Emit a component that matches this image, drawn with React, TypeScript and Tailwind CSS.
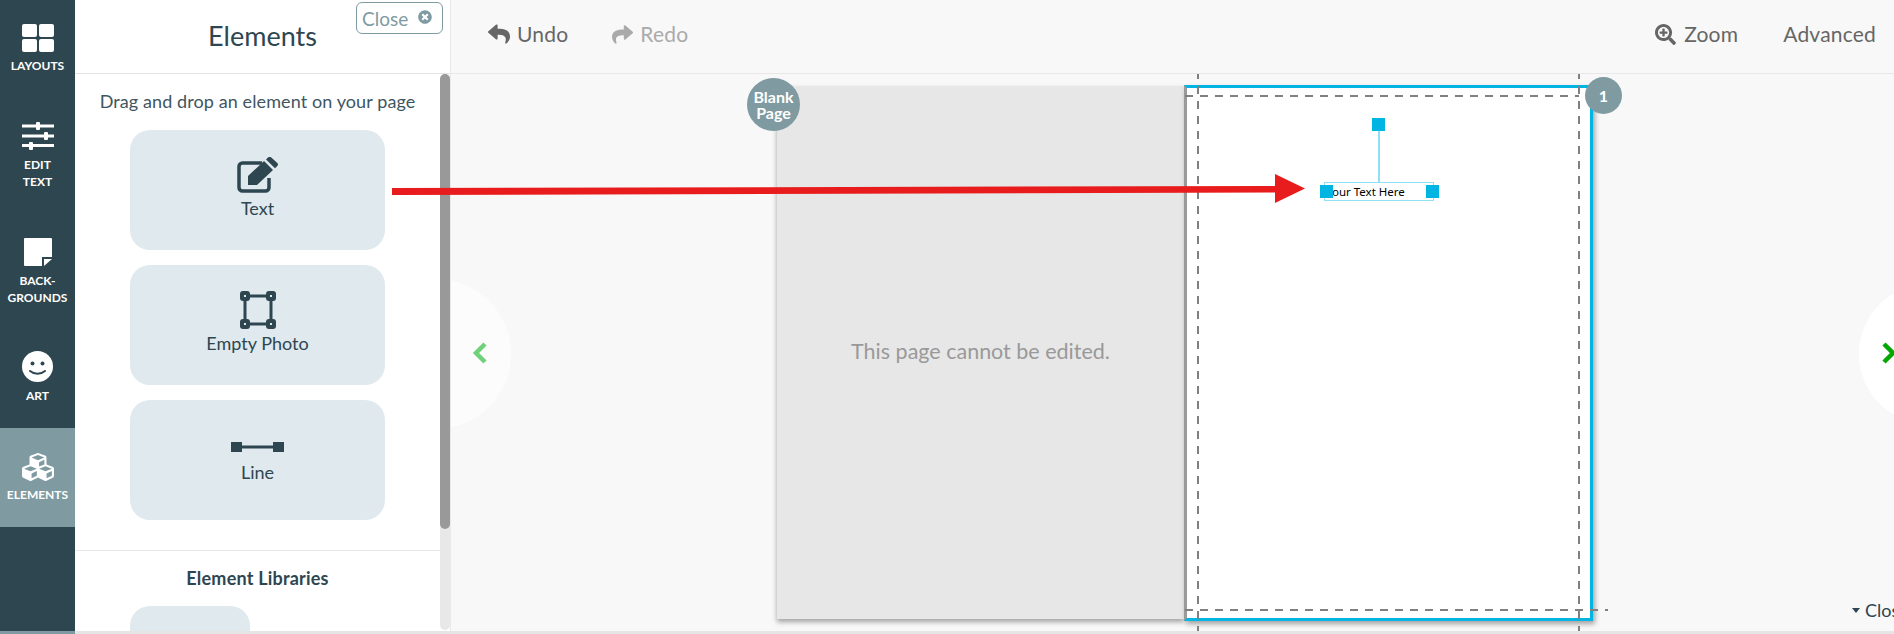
import { FaCubes, FaReply, FaSearchPlus, FaShare, FaTimesCircle } from 'react-icons/fa'

const sideItems = [
  { lines: ['LAYOUTS'], icon: 'layouts', h: 'h-[98px]', pt: 'pt-[24px]', mt: 'mt-[5px]' },
  { lines: ['EDIT', 'TEXT'], icon: 'sliders', h: 'h-[116px]', pt: 'pt-[24px]', mt: 'mt-[6px]' },
  { lines: ['BACK-', 'GROUNDS'], icon: 'note', h: 'h-[114px]', pt: 'pt-[24px]', mt: 'mt-[6px]' },
  { lines: ['ART'], icon: 'smile', h: 'h-[100px]', pt: 'pt-[24px]', mt: 'mt-[7px]' },
  { lines: ['ELEMENTS'], icon: 'cubes', h: 'h-[99px]', pt: 'pt-[25px]', mt: 'mt-[5px]', active: true },
]

function SideIcon({ name }: { name: string }) {
  if (name === 'layouts') {
    return (
      <svg width="32" height="28" viewBox="0 0 32 28" fill="#fff">
        <rect x="0" y="0" width="15" height="13" rx="2" />
        <rect x="17" y="0" width="15" height="13" rx="2" />
        <rect x="0" y="15" width="15" height="13" rx="2" />
        <rect x="17" y="15" width="15" height="13" rx="2" />
      </svg>
    )
  }
  if (name === 'sliders') {
    return (
      <svg width="32" height="28" viewBox="0 0 32 28" fill="#fff">
        <rect x="0" y="2.500" width="32" height="3" />
        <rect x="14" y="0" width="4" height="8" rx="1" />
        <rect x="0" y="12.500" width="32" height="3" />
        <rect x="22" y="10" width="4" height="8" rx="1" />
        <rect x="0" y="22" width="32" height="3" />
        <rect x="7" y="20" width="4" height="8" rx="1" />
      </svg>
    )
  }
  if (name === 'note') {
    return (
      <svg width="28" height="28" viewBox="0 0 28 28" fill="#fff">
        <path d="M1 0h26a1 1 0 0 1 1 1v18h-10v9H1a1 1 0 0 1-1-1V1a1 1 0 0 1 1-1z" />
        <path d="M20 21h8l-8 7z" />
      </svg>
    )
  }
  if (name === 'smile') {
    return (
      <svg width="31" height="31" viewBox="0 0 31 31">
        <circle cx="15.500" cy="15.500" r="15.500" fill="#fff" />
        <circle cx="10.500" cy="12.500" r="2" fill="#2e4650" />
        <circle cx="20.500" cy="12.500" r="2" fill="#2e4650" />
        <path d="M8 20c4 3.500 11 3.500 15 0" fill="none" stroke="#2e4650" strokeWidth="2" strokeLinecap="round" />
      </svg>
    )
  }
  return <FaCubes className="text-white" size={32} />
}

function Sidebar() {
  return (
    <div className="w-[75px] shrink-0 bg-[#2e4650] flex flex-col">
      {sideItems.map((item) => (
        <div
          key={item.icon}
          className={`${item.h} ${item.pt} ${item.active ? 'bg-[#7f9ba1]' : ''} flex flex-col items-center`}
        >
          <div className="h-[28px] flex items-center justify-center">
            <SideIcon name={item.icon} />
          </div>
          <div className={`${item.mt} text-white text-[12px] font-bold leading-[17px] text-center`}>
            {item.lines.map((l) => (
              <div key={l}>{l}</div>
            ))}
          </div>
        </div>
      ))}
    </div>
  )
}

function EditIcon() {
  return (
    <svg width="41" height="36" viewBox="0 0 41 36" fill="#2e4650">
      <path
        d="M25 6H5.500a3.500 3.500 0 0 0-3.500 3.500v21a3.500 3.500 0 0 0 3.500 3.500h23a3.500 3.500 0 0 0 3.500-3.500V21"
        fill="none"
        stroke="#2e4650"
        strokeWidth="3.500"
      />
      <path d="M11 28v-9L27 4l9 9-16 15z" />
      <path d="M29 2.500 31 .500c1-.8 2.400-.8 3.300 0l6 5.500c.9.9.9 2.200 0 3L38 11.300z" />
    </svg>
  )
}

function PhotoIcon() {
  return (
    <svg width="36" height="38" viewBox="0 0 36 38" fill="none">
      <path d="M5 5h26v28H5z" stroke="#2e4650" strokeWidth="3" />
      {[
        [5, 5],
        [31, 5],
        [5, 33],
        [31, 33],
      ].map(([x, y]) => (
        <g key={`${x}-${y}`}>
          <rect x={x - 5} y={y - 5} width="10" height="10" rx="3" fill="#2e4650" />
          <rect x={x - 1} y={y - 1} width="2" height="2" fill="#dfe9ee" />
        </g>
      ))}
    </svg>
  )
}

function LineIcon() {
  return (
    <svg width="53" height="10" viewBox="0 0 53 10" fill="#2e4650">
      <rect x="0" y="0" width="11" height="10" />
      <rect x="10" y="3.500" width="33" height="3" />
      <rect x="42" y="0" width="11" height="10" />
    </svg>
  )
}

function ElementCard({ label, icon, top }: { label: string; icon: React.ReactNode; top: string }) {
  return (
    <div className={`w-[255px] h-[120px] rounded-[20px] bg-[#dfe9ee] flex flex-col items-center ${top}`}>
      <div className="flex items-center justify-center">{icon}</div>
      <div className="text-[18px] leading-[22px] text-[#2e4650]">{label}</div>
    </div>
  )
}

function Panel() {
  return (
    <div className="w-[375px] shrink-0 bg-white flex flex-col relative">
      <div className="h-[74px] shrink-0 border-b border-[#e2e2e2] flex items-center justify-center">
        <span className="text-[27px] text-[#2e4650]">Elements</span>
      </div>
      <div className="absolute top-[2px] left-[281px] w-[87px] h-[32px] border border-[#7f9ba1] rounded-[6px] flex items-center pl-[5px] gap-[10px] text-[#7f9ba1]">
        <span className="text-[19px] leading-none">Close</span>
        <FaTimesCircle size={14} className="text-[#7f9ba1] -mt-[2px]" />
      </div>
      <div className="flex flex-1 min-h-0">
        <div className="w-[365px] overflow-hidden">
          <div className="pt-[16px] text-center text-[18px] tracking-[0.1px] leading-[22px] text-[#40565f] whitespace-nowrap">
            Drag and drop an element on your page
          </div>
          <div className="mt-[18px] flex flex-col items-center gap-[15px]">
            <ElementCard label="Text" top="pt-[27px] gap-[4px]" icon={<EditIcon />} />
            <ElementCard label="Empty Photo" top="pt-[26px] gap-[3px]" icon={<PhotoIcon />} />
            <ElementCard label="Line" top="pt-[42px] gap-[9px]" icon={<LineIcon />} />
          </div>
          <div className="mt-[30px] border-t border-[#e8e8e8] pt-[16px] text-center text-[18px] tracking-[0.2px] leading-[22px] font-bold text-[#2e4650]">
            Element Libraries
          </div>
          <div className="mt-[17px] ml-[55px] w-[120px] h-[40px] rounded-t-[20px] bg-[#dfe9ee]" />
        </div>
        <div className="w-[10px] bg-[#e8e8e8] rounded-[5px] mb-[1px]">
          <div className="h-[455px] bg-[#999999] rounded-[5px]" />
        </div>
      </div>
    </div>
  )
}

function Toolbar() {
  return (
    <div className="h-[74px] shrink-0 border-b border-[#e8e8e8] flex items-center pl-[37px] pr-[18px] text-[21px] tracking-[0.2px] pb-[5px]">
      <FaReply size={22} className="text-[#666666]" />
      <span className="ml-[7px] text-[#666666]">Undo</span>
      <FaShare size={21} className="ml-[44px] text-[#aaaaaa]" />
      <span className="ml-[7px] text-[#aaaaaa]">Redo</span>
      <FaSearchPlus size={21} className="ml-auto text-[#666666]" />
      <span className="ml-[8px] text-[#666666]">Zoom</span>
      <span className="ml-[45px] text-[#666666]">Advanced</span>
    </div>
  )
}

function Pages() {
  return (
    <div className="flex-1 relative overflow-hidden">
      {/* prev / next circles */}
      <div className="absolute -left-[90px] top-[205px] w-[150px] h-[150px] rounded-full bg-[#fcfcfc]" />
      <div className="absolute left-[1408px] top-[210px] w-[150px] h-[140px] rounded-full bg-white" />
      <svg className="absolute left-[21px] top-[267px]" width="16" height="24" viewBox="0 0 16 24" fill="none">
        <path d="M13 3 4 12l9 9" stroke="#6fd27a" strokeWidth="4.500" />
      </svg>
      <svg className="absolute left-[1430px] top-[267px]" width="16" height="24" viewBox="0 0 16 24" fill="none">
        <path d="m3 3 9 9-9 9" stroke="#00a800" strokeWidth="4.500" />
      </svg>

      <div className="flex pl-[326px] pt-[12px]">
        <div className="w-[407px] h-[533px] bg-[#e7e7e7] shadow-[0_3px_5px_rgba(0,0,0,0.35)] flex items-center justify-center">
          <span className="text-[21.500px] text-[#999999] -mt-[2px]">This page cannot be edited.</span>
        </div>
        <div className="w-[409px] h-[536px] -mt-[1px] bg-white border-[3px] border-[#00b5e2] border-l-[#9a9a9a] shadow-[2px_3px_5px_rgba(0,0,0,0.35)]" />
      </div>

      {/* guides */}
      <div className="absolute left-[746px] top-[-3px] bottom-0 w-[2px] bg-[repeating-linear-gradient(to_bottom,#808080_0,#808080_8px,transparent_8px,transparent_15px)]" />
      <div className="absolute left-[1127px] top-[-3px] bottom-0 w-[2px] bg-[repeating-linear-gradient(to_bottom,#808080_0,#808080_8px,transparent_8px,transparent_15px)]" />
      <div className="absolute left-[734px] w-[394px] top-[21px] h-[2px] bg-[repeating-linear-gradient(to_right,#808080_0,#808080_8px,transparent_8px,transparent_15px)]" />
      <div className="absolute left-[734px] w-[423px] top-[535px] h-[2px] bg-[repeating-linear-gradient(to_right,#808080_0,#808080_8px,transparent_8px,transparent_15px)]" />

      {/* page badges */}
      <div className="absolute left-[296px] top-[4px] w-[53px] h-[53px] rounded-full bg-[#7f9ba1] text-white text-[16px] font-bold leading-[16px] flex items-center justify-center text-center">
        <div>
          <div className="h-[16px]">Blank</div>
          <div className="h-[16px]">Page</div>
        </div>
      </div>
      <div className="absolute left-[1134px] top-[3px] w-[37px] h-[37px] rounded-full bg-[#7f9ba1] text-white text-[16px] font-bold flex items-center justify-center">
        1
      </div>

      {/* selected text element */}
      <div className="absolute left-[927px] top-[57px] h-[52px] w-[2px] bg-[#8fe0f3]" />
      <div className="absolute left-[921px] top-[44px] w-[13px] h-[13px] bg-[#00b5e2]" />
      <div className="absolute left-[873px] top-[108px] w-[110px] h-[19px] border border-[#8fe0f3] bg-white pl-[1px] text-[11.500px] leading-[17px] text-black whitespace-nowrap font-['Noto_Sans',sans-serif]">
        Your Text Here
      </div>
      <div className="absolute left-[869px] top-[111px] w-[13px] h-[13px] bg-[#00b5e2]" />
      <div className="absolute left-[975px] top-[111px] w-[13px] h-[13px] bg-[#00b5e2]" />

      <div className="absolute left-[1401px] top-[523px] flex items-center gap-[5px] text-[18px] text-[#2e4650] whitespace-nowrap">
        <span className="w-0 h-0 border-x-[4px] border-x-transparent border-t-[5px] border-t-[#2e4650]" />
        Close
      </div>
    </div>
  )
}

function Arrow() {
  return (
    <svg className="absolute left-[392px] top-[170px]" width="914" height="36" viewBox="0 0 914 36">
      <path d="M0 18 883 16V4l30 14.500L883 33V22.600L0 25z" fill="#e81c1c" />
    </svg>
  )
}

export default function App() {
  return (
    <div className="w-[1894px] h-[634px] overflow-hidden relative flex flex-col bg-[#f8f8f8] font-['Lato',sans-serif]">
      <div className="flex h-[631px]">
        <Sidebar />
        <Panel />
        <div className="flex-1 flex flex-col border-l border-[#e8e8e8] min-w-0">
          <Toolbar />
          <Pages />
        </div>
      </div>
      <div className="flex h-[3px]">
        <div className="w-[75px] bg-[#7f9ba1]" />
        <div className="flex-1 bg-[#e5e5e5]" />
      </div>
      <Arrow />
    </div>
  )
}
